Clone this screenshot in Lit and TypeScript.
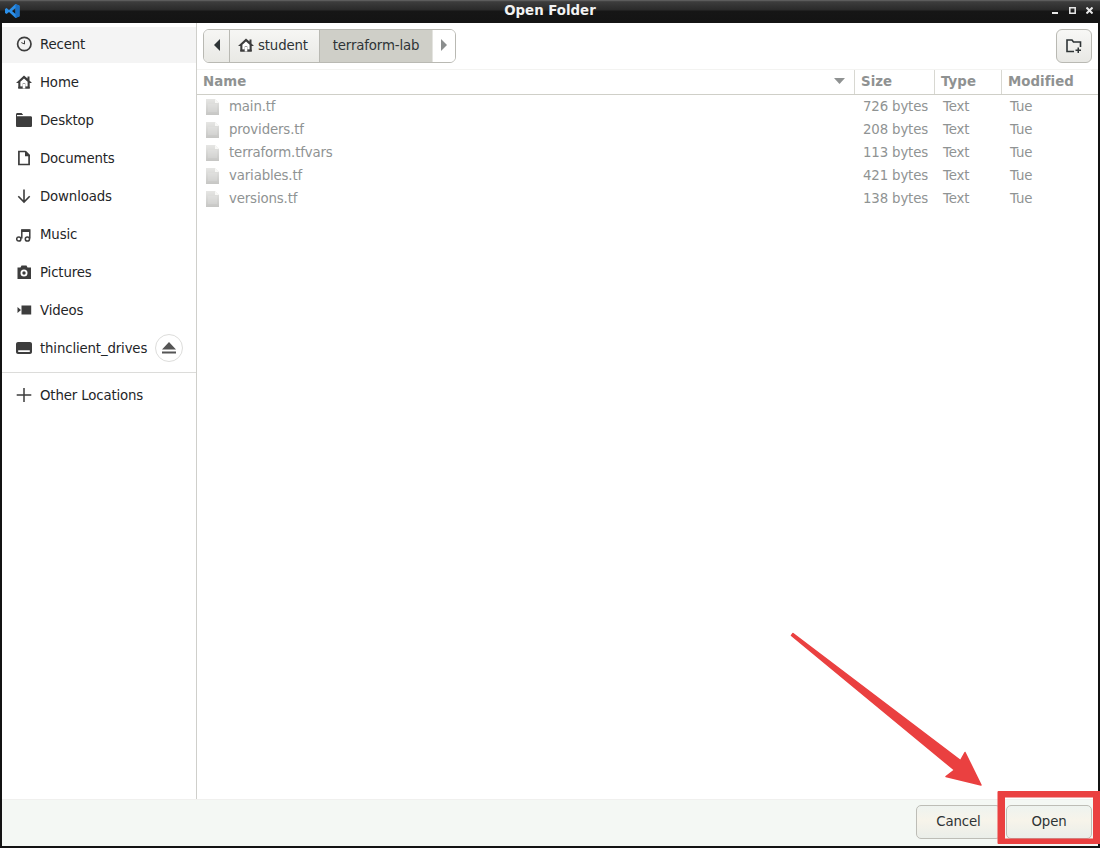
import { LitElement, html, css, svg } from "lit";
import { customElement } from "lit/decorators.js";

const HOME = svg`<path fill="#3d3d3d" d="M8 1.500 0 9h2.300V14.500h11.400V9H16L13.500 6.600V2.500h-2V4.600z"/><path fill="#fff" d="M8 4.400 4.400 7.700V12.500H6.700V9.500h2.600v3h2.300V7.700z"/><path fill="#3d3d3d" d="M2.300 12.800h11.400v1.700H2.300z"/><path fill="#fff" d="M6.700 10h2.600v4.500H6.700z"/>`;

const ICONS: Record<string, unknown> = {
  clock: svg`<circle cx="8.300" cy="8" r="6.700" fill="none" stroke="#3d3d3d" stroke-width="1.700"/><path d="M8.500 4.500V8L5.300 6.600" fill="none" stroke="#3d3d3d" stroke-width="1"/>`,
  home: HOME,
  folder: svg`<path fill="#3d3d3d" d="M0 2.500C0 1.700.6 1 1.400 1h4.200l1.600 2H1v1.200h13.700c.7 0 1.300.6 1.300 1.300v8.200c0 .8-.6 1.300-1.300 1.300H1.300C.6 15 0 14.400 0 13.700z"/>`,
  doc: svg`<path fill="none" stroke="#3d3d3d" stroke-width="1.700" d="M2.900 1.500h6.300L13.100 5.500V14.500H2.900z"/><path fill="#3d3d3d" d="M9 1h1l4 4v1.200H9z"/>`,
  down: svg`<path fill="none" stroke="#3d3d3d" stroke-width="1.600" d="M8 1.500V14M2.300 8.300 8 14l5.700-5.700"/>`,
  music: svg`<path fill="none" stroke="#3d3d3d" stroke-width="1.500" d="M5.800 12.500V4h8v8.500"/><circle cx="2.800" cy="13" r="2.100" fill="none" stroke="#3d3d3d" stroke-width="1.500"/><circle cx="11.400" cy="13" r="2.100" fill="none" stroke="#3d3d3d" stroke-width="1.500"/><path fill="#3d3d3d" d="M5.800 3.500h8v2.500h-8z"/>`,
  camera: svg`<path fill="#3d3d3d" fill-rule="evenodd" d="M1.500 3.500h3l1-2h5l1 2h3.500V15H1.500zM8 5.500a3.500 3.500 0 1 0 0 7 3.500 3.500 0 0 0 0-7zM8 7.300a1.700 1.700 0 1 1 0 3.400 1.700 1.700 0 0 1 0-3.400z"/>`,
  video: svg`<path fill="#3d3d3d" d="M5.500 3.500h9.700v9H5.500zM1.500 5l3.500 3-3.500 3z"/>`,
  drive: svg`<path fill="#3d3d3d" fill-rule="evenodd" d="M2 2h12c1 0 2 .8 2 2v8c0 1.200-1 2-2 2H2c-1 0-2-.8-2-2V4c0-1.200 1-2 2-2zM2.200 10.300v1.600h11.600v-1.600z"/>`,
  plus: svg`<path fill="none" stroke="#3d3d3d" stroke-width="1.500" d="M8 1v14M.7 8h14.600"/>`,
};

const PLACES = [
  ["clock", "Recent"], ["home", "Home"], ["folder", "Desktop"], ["doc", "Documents"],
  ["down", "Downloads"], ["music", "Music"], ["camera", "Pictures"], ["video", "Videos"],
];

const FILES = [
  ["main.tf", "726 bytes"], ["providers.tf", "208 bytes"], ["terraform.tfvars", "113 bytes"],
  ["variables.tf", "421 bytes"], ["versions.tf", "138 bytes"],
];

const icon = (n: string) => html`<svg class="ico" viewBox="0 0 16 16" width="16" height="16">${ICONS[n]}</svg>`;

@customElement("app-root")
export class AppRoot extends LitElement {
  static styles = css`
    :host { display: block; width: 1100px; height: 848px; position: relative; overflow: hidden; background: #131313;
      font-family: "DejaVu Sans", sans-serif; font-size: 13.33px; letter-spacing: -0.15px; color: #2e3436; }
    .win { display: flex; flex-direction: column; height: 846px; padding: 0 2px; box-sizing: border-box; }
    .title { height: 23px; flex: none; margin: 0 -2px; padding-bottom: 2px; box-sizing: border-box; display: flex; align-items: center; justify-content: center; position: relative;
      background: linear-gradient(#6e6e6e 0, #4a4a4a 1px, #3c3c3c 2px, #2a2a2a 10px, #161616 11px, #141414 23px);
      color: #f2f2f2; font-weight: 700; font-size: 13.33px; letter-spacing: 0; }
    .logo { position: absolute; left: 5px; top: 4px; }
    .wc { position: absolute; right: 7px; top: 7px; display: flex; gap: 10px; align-items: center; }
    .body { flex: 1; display: flex; min-height: 0; background: #fff; }
    .side { width: 194px; flex: none; border-right: 1px solid #cfcfcb; padding-top: 4px; display: flex; flex-direction: column; }
    .place { height: 38px; flex: none; display: flex; align-items: center; padding-left: 14px; gap: 8px; box-sizing: border-box; color: #1f2628; }
    .place.sel { background: #f4f4f4; height: 36px; padding-bottom: 2px; }
    .ico { flex: none; display: block; }
    .eject { flex: none; margin-left: auto; margin-right: 14px; width: 28px; height: 28px; box-sizing: border-box; border: 1px solid #dddddb; border-radius: 50%; display: flex; align-items: center; justify-content: center; }
    .sep { height: 1px; background: #dcdcda; margin-top: 5px; flex: none; }
    .other { margin-top: 3px; }
    .main { flex: 1; display: flex; flex-direction: column; min-width: 0; }
    .tools { height: 47px; flex: none; display: flex; align-items: flex-start; padding: 6px 6px 0 6px; justify-content: space-between; border-bottom: 1px solid #f3f3f1; box-sizing: border-box; }
    .path { display: flex; height: 34px; border: 1px solid #b9b9b3; border-radius: 6px; overflow: hidden; box-sizing: border-box; }
    .seg { display: flex; align-items: center; height: 100%; border-right: 1px solid #b9b9b3; background: linear-gradient(#f6f6f4, #e9e9e5); box-sizing: border-box; color: #2e3436; padding-bottom: 2px; }
    .back { width: 26px; justify-content: center; }
    .student { width: 90px; padding-left: 8px; gap: 4px; }
    .cur { width: 112px; justify-content: center; background: #cfcfc8; border-right: none; }
    .next { width: 23px; justify-content: center; background: #fff; border-right: none; border-left: 1px solid #e4e4e0; }
    .newf { width: 36px; height: 34px; border: 1px solid #b9b9b3; border-radius: 6px; background: linear-gradient(#f8f8f6, #e8e8e4); display: flex; align-items: center; justify-content: center; box-sizing: border-box; }
    .grid { display: grid; grid-template-columns: 658px 80px 67px 1fr; }
    .head { height: 25px; border-bottom: 1px solid #cfcfc8; box-sizing: border-box; font-weight: 700; color: #8f9292; letter-spacing: 0.05px; }
    .head > div { display: flex; align-items: center; padding: 0 0 2px 6px; border-right: 1px solid #d8d8d2; }
    .head > div:last-child { border-right: none; }
    .sort { margin-left: auto; margin-right: 9px; }
    .row { height: 23px; color: #8f9393; align-items: center; }
    .row > div { display: flex; align-items: center; white-space: nowrap; height: 23px; box-sizing: border-box; }
    .row > .name { padding-left: 9px; gap: 10px; }
    .row > .size, .row > .type, .row > .mod { padding-left: 8px; }
    .list { flex: 1; }
    .actions { height: 47px; flex: none; background: #f4f8f4; border-top: 1px solid #f0f0ee; display: flex; justify-content: flex-end; align-items: flex-start; padding: 5px 6px 0 0; gap: 5px; box-sizing: border-box; }
    .btn { height: 34px; border: 1px solid #bdbdb6; border-radius: 5px; background: linear-gradient(#eef3ef, #f7f4ea 45%, #eaeee9); display: flex; align-items: center; justify-content: center; box-sizing: border-box; color: #2e3436; padding-bottom: 2px; }
    .cancel { width: 85px; }
    .open { width: 86px; }
    .overlay { position: absolute; inset: 0; pointer-events: none; }
  `;

  render() {
    return html`
      <div class="win">
        <div class="title">
          <svg class="logo" width="15" height="14" viewBox="0 0 15 14">
            <path fill="#2b8fe8" d="M10.500 0 14.500 1.800V12.200L10.500 14 4 8 1.600 10 0 9V5L1.600 4 4 6zM10.500 4 7 7l3.500 3z"/>
            <path fill="#1a6fc4" d="M10.500 0 14.500 1.800V12.200L10.500 14V10L10.500 4z"/>
          </svg>
          Open Folder
          <div class="wc">
            <svg width="7" height="7" viewBox="0 0 7 7"><path fill="#e8e8e8" d="M0 5h6v2H0z"/></svg>
            <svg width="7" height="7" viewBox="0 0 7 7"><path fill="none" stroke="#e8e8e8" stroke-width="1.500" d="M.8.800h5.400v5.400H.8z"/></svg>
            <svg width="7" height="7" viewBox="0 0 7 7"><path fill="none" stroke="#e8e8e8" stroke-width="2" d="M.5.500l6 6M6.500.500l-6 6"/></svg>
          </div>
        </div>
        <div class="body">
          <div class="side">
            ${PLACES.map(([i, t], k) => html`<div class="place ${k === 0 ? "sel" : ""}">${icon(i)}<span>${t}</span></div>`)}
            <div class="place">${icon("drive")}<span>thinclient_drives</span>
              <div class="eject"><svg width="16" height="14" viewBox="0 0 16 14"><path fill="#555" d="M8 1 15 8.500H1zM1 10.500h14V12.500H1z"/></svg></div>
            </div>
            <div class="sep"></div>
            <div class="place other">${icon("plus")}<span>Other Locations</span></div>
          </div>
          <div class="main">
            <div class="tools">
              <div class="path">
                <div class="seg back"><svg width="8" height="12" viewBox="0 0 8 12"><path fill="#2e3436" d="M7 0v12L1 6z"/></svg></div>
                <div class="seg student"><svg class="ico" width="16" height="16" viewBox="0 0 16 16">${HOME}</svg><span>student</span></div>
                <div class="seg cur">terraform-lab</div>
                <div class="seg next"><svg width="8" height="12" viewBox="0 0 8 12"><path fill="#8b8e8e" d="M1 0v12l6-6z"/></svg></div>
              </div>
              <div class="newf">
                <svg width="18" height="16" viewBox="0 0 18 16"><path fill="none" stroke="#2e3436" stroke-width="1.600" d="M9 13.500H2V2h5l1.500 2H15.500V9"/><path fill="#2e3436" d="M12.500 9.500h1.500v2h2v1.500h-2v2h-1.500v-2h-2v-1.500h2z"/></svg>
              </div>
            </div>
            <div class="grid head">
              <div>Name<svg class="sort" width="11" height="6" viewBox="0 0 11 6"><path fill="#8f9292" d="M0 0h11L5.500 6z"/></svg></div>
              <div>Size</div><div>Type</div><div>Modified</div>
            </div>
            <div class="list">
              ${FILES.map(([n, s]) => html`<div class="grid row">
                <div class="name"><svg class="ico" width="13" height="16" viewBox="0 0 13 16"><defs><linearGradient id="fg" x1="0" y1="0" x2="0" y2="1"><stop offset="0" stop-color="#e6e6e4"/><stop offset="1" stop-color="#c6c6c4"/></linearGradient></defs><path fill="url(#fg)" d="M0 0h9l4 4v12H0z"/><path fill="#f8f8f6" d="M9 0l4 4H9z"/><path stroke="#f0f0ee" stroke-width=".4" d="M2 6h9M2 8h9M2 10h9M2 12h9"/></svg><span>${n}</span></div>
                <div class="size">${s}</div><div class="type">Text</div><div class="mod">Tue</div>
              </div>`)}
            </div>
          </div>
        </div>
        <div class="actions">
          <div class="btn cancel">Cancel</div>
          <div class="btn open">Open</div>
        </div>
      </div>
      <svg class="overlay" width="1100" height="848" viewBox="0 0 1100 848">
        <path fill="#ea4040" stroke="#ea4040" stroke-width="1.500" stroke-linejoin="round" d="M791.500 635.500 793 633.500 960.500 760.500 965 752.500 981 785 946 776.500 954.500 770z"/>
        <path fill="#ea4040" fill-rule="evenodd" d="M998.500 791H1100V844H998.500a1 1 0 0 1-1-1V792a1 1 0 0 1 1-1zM1005 797.500V838.500H1093V797.500z"/>
      </svg>
    `;
  }
}
